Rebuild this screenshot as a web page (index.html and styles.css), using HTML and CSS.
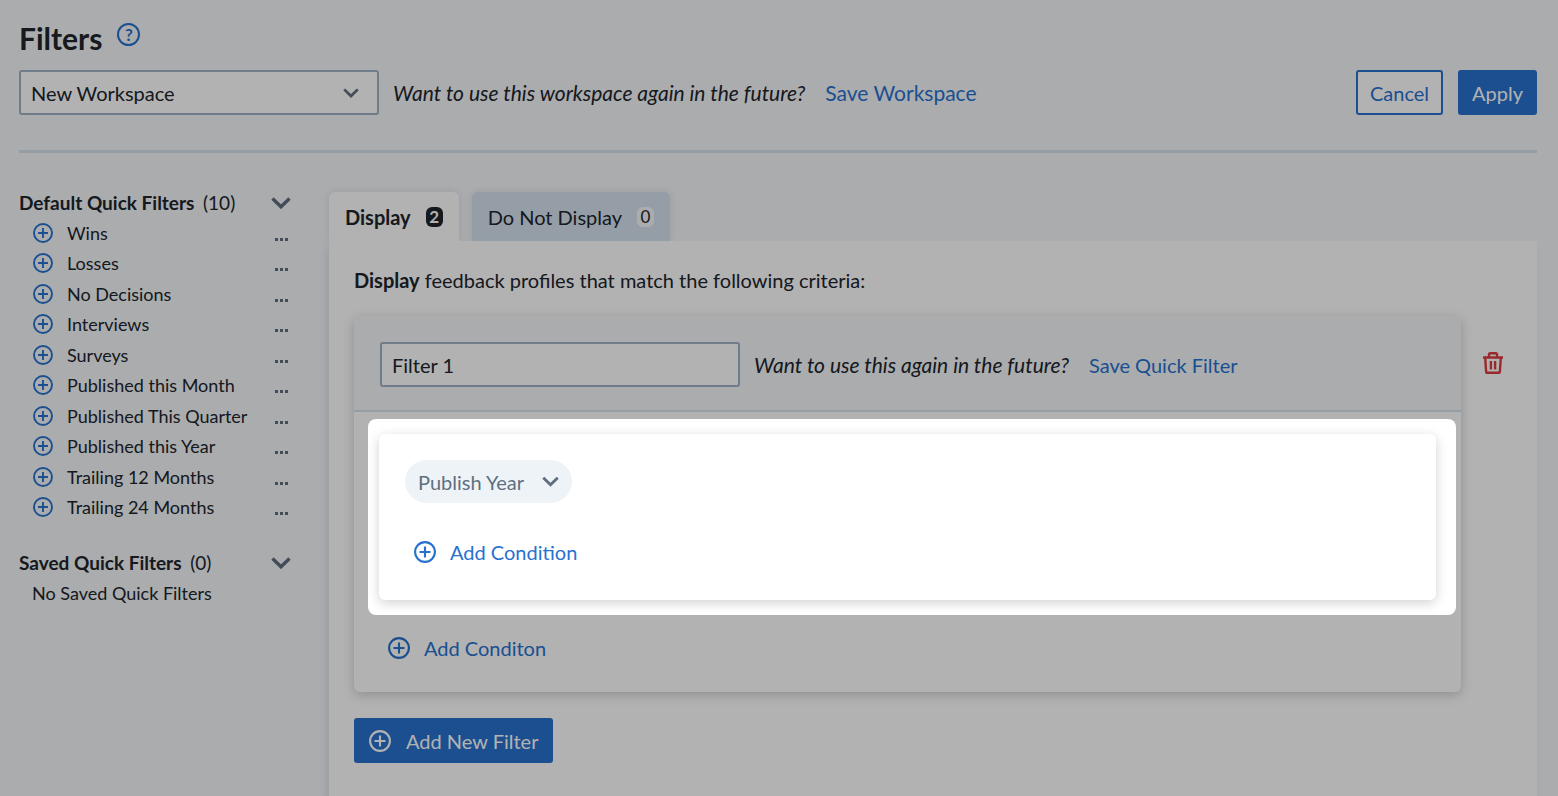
FILE: index.html
```html
<!DOCTYPE html>
<html lang="en">
<head>
    <meta charset="UTF-8">
    <meta name="viewport" content="width=device-width, initial-scale=1.0">
    <title>Filters</title>
    <link rel="stylesheet" href="styles.css">
</head>
<body>
    <!-- Shared icons -->
    <svg class="sprite" aria-hidden="true">
        <symbol id="icon-plus" viewBox="0 0 22 22">
            <circle cx="11" cy="11" r="9.900" fill="none" stroke="currentColor" stroke-width="2.100"/>
            <path d="M11 5.500v11M5.500 11h11" fill="none" stroke="currentColor" stroke-width="2.100"/>
        </symbol>
        <symbol id="icon-chevron" viewBox="0 0 20 12">
            <path d="M1.500 1.500L10 9.800l8.500-8.300" fill="none" stroke="currentColor" stroke-width="3.400"/>
        </symbol>
        <symbol id="icon-dots" viewBox="0 0 13 3">
            <path d="M0 0h3v3H0zM5 0h3v3H5zM10 0h3v3h-3z" fill="currentColor"/>
        </symbol>
    </svg>

    <header class="page-header">
        <div class="title-row">
            <h1>Filters</h1>
            <button type="button" class="help-btn" aria-label="Help">?</button>
        </div>
        <div class="workspace-row">
            <div class="select-wrap">
                <select class="field" aria-label="Workspace">
                    <option>New Workspace</option>
                </select>
                <svg class="select-arrow"><use href="#icon-chevron"/></svg>
            </div>
            <em class="hint">Want to use this workspace again in the future?</em>
            <a href="#" class="save-link">Save Workspace</a>
            <div class="actions">
                <button type="button" class="btn btn-outline">Cancel</button>
                <button type="button" class="btn btn-primary">Apply</button>
            </div>
        </div>
    </header>

    <div class="content">
        <aside class="sidebar">
            <div class="group-head">
                <h2>Default Quick Filters <span>(10)</span></h2>
                <button type="button" class="icon-btn" aria-label="Collapse default quick filters"><svg class="chevron"><use href="#icon-chevron"/></svg></button>
            </div>
            <ul class="quick-list">
                <li><button type="button" class="quick-add"><svg><use href="#icon-plus"/></svg>Wins</button><button type="button" class="icon-btn more" aria-label="More"><svg><use href="#icon-dots"/></svg></button></li>
                <li><button type="button" class="quick-add"><svg><use href="#icon-plus"/></svg>Losses</button><button type="button" class="icon-btn more" aria-label="More"><svg><use href="#icon-dots"/></svg></button></li>
                <li><button type="button" class="quick-add"><svg><use href="#icon-plus"/></svg>No Decisions</button><button type="button" class="icon-btn more" aria-label="More"><svg><use href="#icon-dots"/></svg></button></li>
                <li><button type="button" class="quick-add"><svg><use href="#icon-plus"/></svg>Interviews</button><button type="button" class="icon-btn more" aria-label="More"><svg><use href="#icon-dots"/></svg></button></li>
                <li><button type="button" class="quick-add"><svg><use href="#icon-plus"/></svg>Surveys</button><button type="button" class="icon-btn more" aria-label="More"><svg><use href="#icon-dots"/></svg></button></li>
                <li><button type="button" class="quick-add"><svg><use href="#icon-plus"/></svg>Published this Month</button><button type="button" class="icon-btn more" aria-label="More"><svg><use href="#icon-dots"/></svg></button></li>
                <li><button type="button" class="quick-add"><svg><use href="#icon-plus"/></svg>Published This Quarter</button><button type="button" class="icon-btn more" aria-label="More"><svg><use href="#icon-dots"/></svg></button></li>
                <li><button type="button" class="quick-add"><svg><use href="#icon-plus"/></svg>Published this Year</button><button type="button" class="icon-btn more" aria-label="More"><svg><use href="#icon-dots"/></svg></button></li>
                <li><button type="button" class="quick-add"><svg><use href="#icon-plus"/></svg>Trailing 12 Months</button><button type="button" class="icon-btn more" aria-label="More"><svg><use href="#icon-dots"/></svg></button></li>
                <li><button type="button" class="quick-add"><svg><use href="#icon-plus"/></svg>Trailing 24 Months</button><button type="button" class="icon-btn more" aria-label="More"><svg><use href="#icon-dots"/></svg></button></li>
            </ul>
            <div class="group-head">
                <h2>Saved Quick Filters <span>(0)</span></h2>
                <button type="button" class="icon-btn" aria-label="Collapse saved quick filters"><svg class="chevron"><use href="#icon-chevron"/></svg></button>
            </div>
            <p class="empty-note">No Saved Quick Filters</p>
        </aside>

        <main class="main">
            <div class="tabs" role="tablist">
                <button type="button" class="tab active" role="tab" aria-selected="true">Display <span class="count">2</span></button>
                <button type="button" class="tab" role="tab" aria-selected="false">Do Not Display <span class="count">0</span></button>
            </div>
            <section class="panel">
                <p class="criteria"><strong>Display</strong> feedback profiles that match the following criteria:</p>
                <div class="filter-row">
                    <div class="filter-card">
                        <div class="filter-head">
                            <input type="text" class="field" value="Filter 1" aria-label="Filter name">
                            <em class="hint">Want to use this again in the future?</em>
                            <a href="#">Save Quick Filter</a>
                        </div>
                        <!-- Highlighted step, the rest of the page is dimmed -->
                        <div class="spotlight">
                            <div class="condition-card">
                                <button type="button" class="pill">Publish Year <svg class="pill-arrow"><use href="#icon-chevron"/></svg></button>
                                <button type="button" class="add-link"><svg><use href="#icon-plus"/></svg>Add Condition</button>
                            </div>
                        </div>
                        <button type="button" class="add-link outer"><svg><use href="#icon-plus"/></svg>Add Conditon</button>
                    </div>
                    <button type="button" class="icon-btn delete-btn" aria-label="Delete filter">
                        <svg viewBox="0 0 20 22">
                            <path d="M0 5.500h20M6 5V2.500Q6 1.200 7.300 1.200h5.400Q14 1.200 14 2.500V5M2.200 5.500l.9 13.800q.1 1.500 1.600 1.500h10.600q1.500 0 1.600-1.500l.9-13.800M7.900 9v8.500M12.100 9v8.500" fill="none" stroke="currentColor" stroke-width="2.400"/>
                        </svg>
                    </button>
                </div>
                <button type="button" class="btn btn-primary new-filter"><svg><use href="#icon-plus"/></svg>Add New Filter</button>
            </section>
        </main>
    </div>
</body>
</html>
```
FILE: styles.css
```css
* {
    box-sizing: border-box;
}

body {
    display: flex;
    flex-direction: column;
    min-height: 100vh;
    margin: 0;
    padding: 19px 21px 0 19px;
    background-color: #f5f7fa;
    color: #20252c;
    font-family: Lato, "Open Sans", sans-serif;
    font-size: 20px;
    line-height: 30px;
    overflow: hidden;
}

button,
input,
select {
    font: inherit;
    color: inherit;
}

button {
    display: inline-flex;
    align-items: center;
    padding: 0;
    border: none;
    background: none;
    cursor: pointer;
}

a {
    color: #2871cf;
    text-decoration: none;
}

svg {
    display: block;
    flex-shrink: 0;
}

.sprite {
    display: none;
}

/* Header */
.page-header {
    padding-bottom: 35px;
    border-bottom: 3px solid #d6e2eb;
}

.title-row {
    display: flex;
    align-items: flex-start;
    gap: 15px;
    height: 51px;
}

h1 {
    margin: 0;
    font-size: 30px;
    line-height: 38px;
}

.help-btn {
    justify-content: center;
    width: 23px;
    height: 23px;
    margin-top: 4px;
    border: 2px solid #2871cf;
    border-radius: 50%;
    color: #2871cf;
    font-size: 17px;
    font-weight: bold;
    line-height: 19px;
}

.workspace-row,
.filter-head {
    display: flex;
    align-items: center;
    gap: 14px;
}

.hint {
    margin-right: 6px;
    font-size: 21px;
}

.save-link {
    font-size: 21px;
}

.select-wrap {
    position: relative;
}

.field {
    display: block;
    width: 360px;
    height: 45px;
    padding: 0 10px;
    border: 2px solid #9fb2c4;
    border-radius: 3px;
    background-color: #fff;
    appearance: none;
}

.select-arrow {
    position: absolute;
    top: 18px;
    right: 20px;
    width: 16px;
    height: 10px;
    color: #5f6f80;
    pointer-events: none;
}

.actions {
    display: flex;
    gap: 15px;
    margin-left: auto;
}

.btn {
    height: 45px;
    padding: 0 14px;
    border-radius: 3px;
}

.btn-outline {
    padding: 0 12px;
    border: 2px solid #2871cf;
    background-color: #fff;
    color: #2871cf;
}

.btn-primary {
    background-color: #2871cf;
    color: #fff;
}

.content {
    display: flex;
    flex: 1;
    gap: 38px;
    padding-top: 34px;
}

/* Sidebar */
.sidebar {
    width: 272px;
    font-size: 18px;
}

.group-head {
    display: flex;
    align-items: center;
    justify-content: space-between;
    height: 31px;
}

.group-head h2 {
    margin: 0;
    font-size: 19px;
    line-height: 30px;
}

.group-head h2 span {
    margin-left: 4px;
    font-weight: normal;
}

.chevron {
    width: 20px;
    height: 12px;
    color: #5f6f80;
}

.quick-list {
    display: flex;
    flex-direction: column;
    justify-content: space-between;
    min-height: 304px;
    margin: 0 0 25px;
    padding: 0 3px 0 14px;
    list-style: none;
}

.quick-list li {
    display: flex;
    justify-content: space-between;
}

.quick-add {
    gap: 14px;
}

.quick-add svg {
    width: 20px;
    height: 20px;
    color: #2871cf;
}

.more {
    padding-top: 13px;
    color: #5f6f80;
}

.more svg {
    width: 13px;
    height: 3px;
}

.empty-note {
    margin: 0;
    padding-left: 13px;
}

/* Main area */
.main {
    display: flex;
    flex: 1;
    flex-direction: column;
    padding-top: 5px;
}

.tabs {
    display: flex;
    gap: 13px;
}

.tab {
    gap: 15px;
    height: 49px;
    padding: 0 16px;
    border-radius: 6px 6px 0 0;
    background-color: #d6e3ee;
    box-shadow: 0 0 8px rgba(60, 80, 100, 0.15);
}

.tab.active {
    background-color: #fff;
    font-weight: bold;
}

.count {
    width: 17px;
    border-radius: 6px;
    background-color: #f5f7fa;
    font-size: 17px;
    line-height: 20px;
    text-align: center;
}

.active .count {
    background-color: #20252c;
    color: #fff;
}

.panel {
    position: relative;
    flex: 1;
    padding: 24px 34px 33px 25px;
    background-color: #fff;
    box-shadow: -3px 6px 8px rgba(60, 80, 100, 0.12);
}

.criteria {
    margin: 0 0 21px;
}

.filter-row {
    display: flex;
    align-items: flex-start;
    gap: 22px;
}

.filter-card {
    flex: 1;
    padding-bottom: 26px;
    border-radius: 6px;
    box-shadow: 0 3px 12px rgba(0, 0, 0, 0.2);
}

.filter-head {
    padding: 26px 26px 23px;
    border-bottom: 2px solid #d6e2eb;
    border-radius: 6px 6px 0 0;
    background-color: #f5f7fa;
}

.spotlight {
    position: relative;
    z-index: 10;
    margin: 7px 5px 18px 14px;
    padding: 15px 20px 15px 11px;
    border-radius: 8px;
    background-color: #fff;
    box-shadow: 0 0 0 3000px rgba(0, 0, 0, 0.3);
}

.condition-card {
    display: flex;
    flex-direction: column;
    align-items: flex-start;
    gap: 34px;
    padding: 26px 26px 33px;
    border-radius: 6px;
    background-color: #fff;
    box-shadow: 0 3px 12px rgba(0, 0, 0, 0.18);
}

.pill {
    gap: 18px;
    height: 43px;
    padding: 0 13px;
    border-radius: 22px;
    background-color: #eef3f8;
    color: #5f6f80;
}

.pill-arrow {
    width: 17px;
    height: 11px;
}

.add-link {
    gap: 14px;
    margin-left: 9px;
    color: #2871cf;
}

.add-link.outer {
    margin-left: 34px;
}

.add-link svg,
.new-filter svg {
    width: 22px;
    height: 22px;
}

.delete-btn {
    margin-top: 36px;
    color: #dd3c40;
}

.delete-btn svg {
    width: 20px;
    height: 22px;
}

.new-filter {
    gap: 15px;
    margin-top: 26px;
    padding: 0 15px;
}
```
